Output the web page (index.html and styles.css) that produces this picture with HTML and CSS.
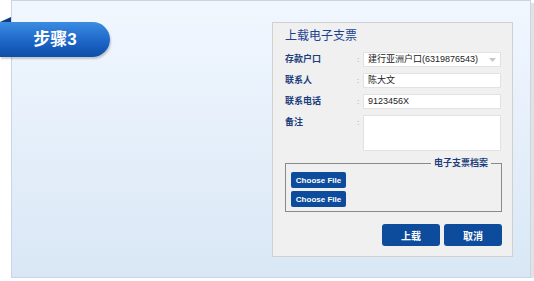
FILE: index.html
```html
<!DOCTYPE html>
<html lang="zh-CN">
<head>
    <meta charset="UTF-8">
    <title>上载电子支票</title>
    <link rel="stylesheet" href="styles.css">
</head>
<body>

<div class="page">
    <div class="panel">
        <div class="step-tab">步骤3</div>

        <div class="upload-box">
            <h2 class="box-title">上载电子支票</h2>

            <div class="form-grid">
                <label>存款户口</label>
                <span class="colon">:</span>
                <div class="field select">
                    <span>建行亚洲户口(6319876543)</span>
                    <svg width="7" height="4" viewBox="0 0 7 4"><path d="M0 0 L7 0 L3.5 4 Z" fill="#c8c8c8"/></svg>
                </div>

                <label>联系人</label>
                <span class="colon">:</span>
                <div class="field">陈大文</div>

                <label>联系电话</label>
                <span class="colon">:</span>
                <div class="field">9123456X</div>

                <label>备注</label>
                <span class="colon">:</span>
                <div class="field memo"></div>
            </div>

            <fieldset class="files">
                <legend>电子支票档案</legend>
                <button class="file-btn">Choose File</button>
                <button class="file-btn">Choose File</button>
            </fieldset>

            <div class="actions">
                <button class="btn">上载</button>
                <button class="btn">取消</button>
            </div>
        </div>
    </div>
</div>

</body>
</html>
```

FILE: styles.css
```css
body {
    margin: 0;
    font-family: 'Liberation Sans', 'Noto Sans CJK SC', sans-serif;
    background: #fff;
}
.page {
    padding-left: 11px;
}
.panel {
    position: relative;
    box-sizing: border-box;
    width: 520px;
    height: 278px;
    padding: 21px 17px 0 0;
    display: flex;
    justify-content: flex-end;
    align-items: flex-start;
    border: 1px solid #c9d5e2;
    background: linear-gradient(#f1f7ff, #d9e7f5);
    box-shadow: 3px 3px 0 #e2e2e2;
}
.step-tab {
    position: absolute;
    left: -12px;
    top: 21px;
    width: 110px;
    height: 35px;
    line-height: 35px;
    text-align: center;
    color: #fff;
    font-size: 17px;
    font-weight: bold;
    border-radius: 0 18px 18px 0;
    background: linear-gradient(#3b8ce2, #1b63c4 60%, #0e4ea6);
    box-shadow: 1px 2px 2px rgba(0,0,0,0.2);
}
.step-tab::before {
    content: "";
    position: absolute;
    left: 0;
    top: -5px;
    width: 11px;
    height: 5px;
    background: #0c3d82;
    clip-path: polygon(0 100%, 100% 0, 100% 100%);
}
.upload-box {
    box-sizing: border-box;
    width: 241px;
    height: 235px;
    padding: 5px 10px 0 12px;
    background: #f0f0f0;
    border: 1px solid #d0d0d0;
}
.box-title {
    margin: 0 0 8px;
    font-size: 12px;
    line-height: 16px;
    font-weight: normal;
    color: #1b4391;
}
.form-grid {
    display: grid;
    grid-template-columns: 72px 6px 138px;
    grid-template-rows: 15px 15px 15px 36px;
    row-gap: 6px;
}
.form-grid label {
    font-size: 9px;
    line-height: 15px;
    font-weight: bold;
    color: #1d3e7c;
}
.colon {
    font-size: 8px;
    line-height: 15px;
    color: #999;
}
.field {
    box-sizing: border-box;
    height: 15px;
    padding: 0 4px;
    font-size: 9px;
    line-height: 13px;
    color: #222;
    background: #fff;
    border: 1px solid #e2e2e2;
}
.select {
    display: flex;
    justify-content: space-between;
    align-items: center;
}
.memo {
    height: 36px;
}
.files {
    box-sizing: border-box;
    width: 217px;
    margin: 7px 0 0;
    padding: 3px 5px 4px;
    border: 1px solid #8a8a8a;
    display: flex;
    flex-direction: column;
    align-items: flex-start;
    gap: 3px;
}
.files legend {
    margin-left: auto;
    margin-right: 5px;
    padding: 0 3px;
    font-size: 9px;
    line-height: 11px;
    font-weight: bold;
    color: #1d3e7c;
}
.file-btn {
    width: 55px;
    height: 16px;
    padding: 0;
    border: none;
    border-radius: 2px;
    background: #0d4c9c;
    color: #fff;
    font-family: 'Liberation Sans', sans-serif;
    font-size: 8px;
    font-weight: bold;
}
.actions {
    display: flex;
    justify-content: flex-end;
    gap: 4px;
    width: 217px;
    margin-top: 12px;
}
.btn {
    width: 58px;
    height: 22px;
    border: none;
    border-radius: 3px;
    background: #0d4c9c;
    color: #fff;
    font-family: 'Noto Sans CJK SC', sans-serif;
    font-size: 10px;
    font-weight: bold;
}
```
